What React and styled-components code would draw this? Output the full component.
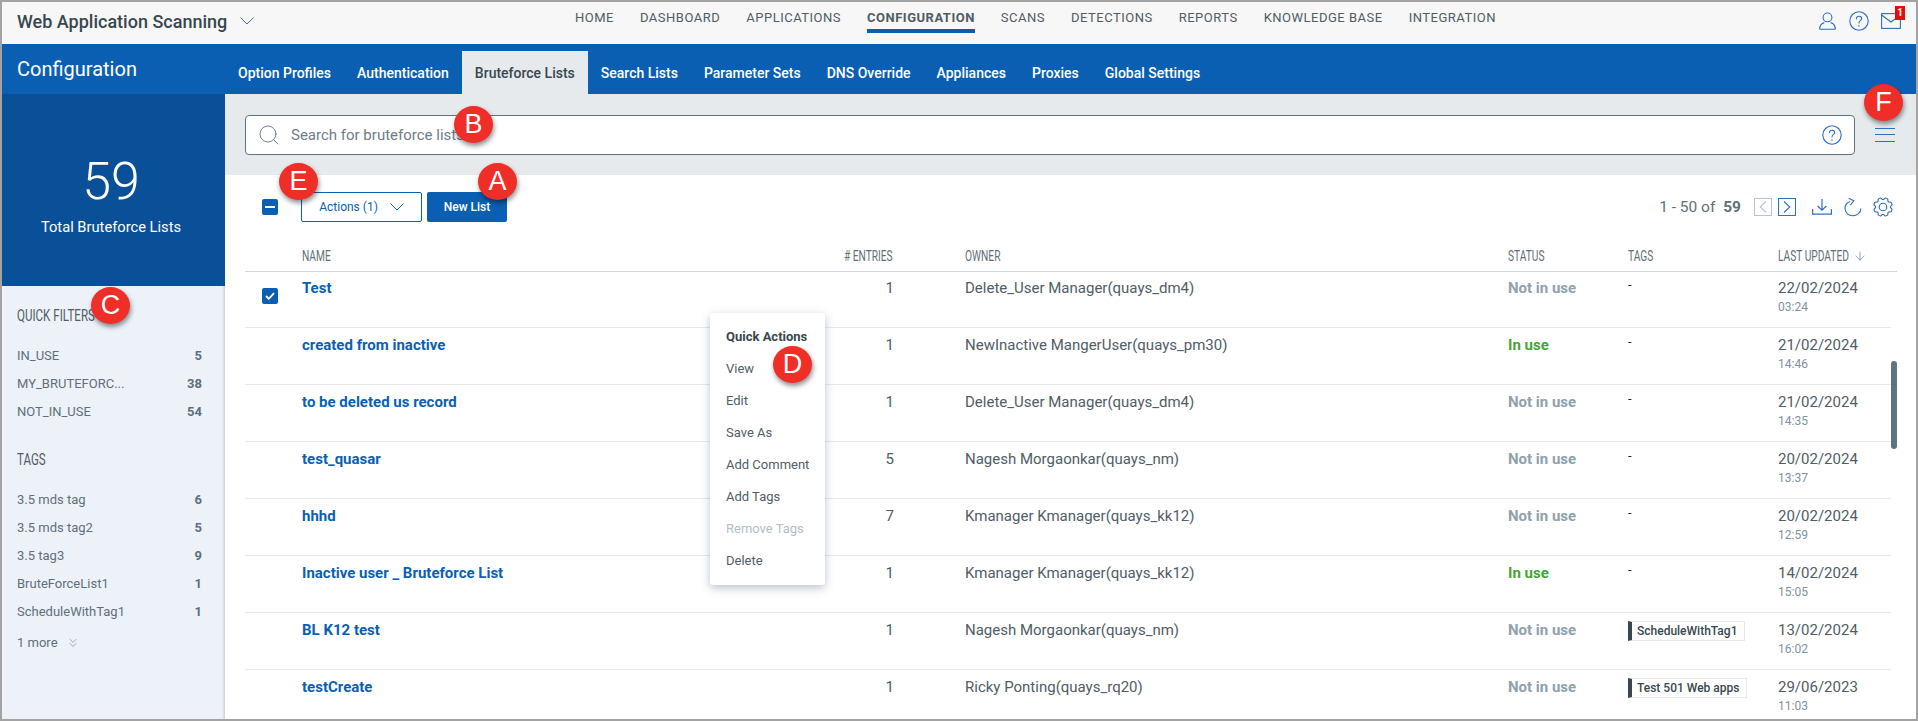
import React from 'react';
import styled, { createGlobalStyle } from 'styled-components';
import { ChevronsDown, Search, ArrowDown } from 'lucide-react';
import { PiGearLight } from 'react-icons/pi';

const GlobalStyle = createGlobalStyle`
  html, body {
    margin: 0;
    padding: 0;
    background: #a3a3a3;
    overflow: hidden;
  }
  * { box-sizing: border-box; }
`;

const NAV = ['HOME', 'DASHBOARD', 'APPLICATIONS', 'CONFIGURATION', 'SCANS', 'DETECTIONS', 'REPORTS', 'KNOWLEDGE BASE', 'INTEGRATION'];
const TABS = ['Option Profiles', 'Authentication', 'Bruteforce Lists', 'Search Lists', 'Parameter Sets', 'DNS Override', 'Appliances', 'Proxies', 'Global Settings'];
const QUICK = [['IN_USE', 5], ['MY_BRUTEFORC...', 38], ['NOT_IN_USE', 54]];
const SIDE_TAGS = [['3.5 mds tag', 6], ['3.5 mds tag2', 5], ['3.5 tag3', 9], ['BruteForceList1', 1], ['ScheduleWithTag1', 1]];
const MENU = ['View', 'Edit', 'Save As', 'Add Comment', 'Add Tags', 'Remove Tags', 'Delete'];
const ROWS = [
  { name: 'Test', entries: 1, owner: 'Delete_User Manager(quays_dm4)', used: false, date: '22/02/2024', time: '03:24', checked: true },
  { name: 'created from inactive', entries: 1, owner: 'NewInactive MangerUser(quays_pm30)', used: true, date: '21/02/2024', time: '14:46' },
  { name: 'to be deleted us record', entries: 1, owner: 'Delete_User Manager(quays_dm4)', used: false, date: '21/02/2024', time: '14:35' },
  { name: 'test_quasar', entries: 5, owner: 'Nagesh Morgaonkar(quays_nm)', used: false, date: '20/02/2024', time: '13:37' },
  { name: 'hhhd', entries: 7, owner: 'Kmanager Kmanager(quays_kk12)', used: false, date: '20/02/2024', time: '12:59' },
  { name: 'Inactive user _ Bruteforce List', entries: 1, owner: 'Kmanager Kmanager(quays_kk12)', used: true, date: '14/02/2024', time: '15:05' },
  { name: 'BL K12 test', entries: 1, owner: 'Nagesh Morgaonkar(quays_nm)', used: false, tag: 'ScheduleWithTag1', date: '13/02/2024', time: '16:02' },
  { name: 'testCreate', entries: 1, owner: 'Ricky Ponting(quays_rq20)', used: false, tag: 'Test 501 Web apps', date: '29/06/2023', time: '11:03' },
];
const CALLOUTS = [
  { label: 'A', x: 478, y: 163 },
  { label: 'B', x: 454, y: 106 },
  { label: 'C', x: 91, y: 287 },
  { label: 'D', x: 773, y: 346 },
  { label: 'E', x: 279, y: 163 },
  { label: 'F', x: 1864, y: 84 },
];

const HelpIcon = ({ size = 20 }) => (
  <svg width={size} height={size} viewBox="0 0 20 20" fill="none" stroke="#2f6fbd" strokeWidth="1.1">
    <circle cx="10" cy="10" r="9.2" />
    <path d="M7.4 7.8c0-1.6 1.2-2.6 2.7-2.6s2.6 1 2.6 2.3c0 1.9-2.7 2-2.7 4.4" strokeLinecap="round" />
    <path d="M10 14.2v1.2" strokeWidth="1.4" />
  </svg>
);

const UserIcon = () => (
  <svg width="17" height="18" viewBox="0 0 17 18" fill="none" stroke="#2f6fbd" strokeWidth="1.1">
    <circle cx="8.5" cy="5.4" r="4.4" />
    <path d="M.7 17.3c0-3.4 1.5-5.9 4.6-6.7M16.3 17.3c0-3.4-1.5-5.9-4.6-6.7M.7 17.3h15.6" />
  </svg>
);

const MailIcon = () => (
  <svg width="20" height="16" viewBox="0 0 20 16" fill="none" stroke="#2f6fbd" strokeWidth="1.1">
    <rect x=".6" y=".6" width="18.8" height="14.8" />
    <path d="M.6 2l9.4 7 9.4-7" />
  </svg>
);

const DownChevron = ({ color }) => (
  <svg width="14" height="8" viewBox="0 0 14 8" fill="none" stroke={color} strokeWidth="1">
    <path d="M.5 .6L7 7l6.500-6.400" />
  </svg>
);

const PageArrow = ({ dir }) => (
  <svg width="8" height="12" viewBox="0 0 8 12" fill="none" stroke="currentColor" strokeWidth="1.1">
    <path d={dir === 'left' ? 'M7 .5L1.2 6 7 11.5' : 'M1 .5L6.8 6 1 11.5'} />
  </svg>
);

const DownloadIcon = () => (
  <svg width="20" height="16" viewBox="0 0 20 16" fill="none" stroke="#2f6fbd" strokeWidth="1.2">
    <path d="M10 0v11M5.600 7l4.400 4.200L14.400 7M.6 10v5.200h18.800V10" />
  </svg>
);

const RefreshIcon = () => (
  <svg width="18" height="20" viewBox="0 0 18 20" fill="none" stroke="#2f6fbd" strokeWidth="1.1">
    <path d="M6 4.600C3 5.700 1 8.300 1 11.400c0 3.900 3.400 7.400 7.800 7.400 4.300 0 8-3.300 8-7.400" />
    <path d="M5.300 .8L9.800 4.300 5.600 7.900" transform="rotate(-12 7 4)" />
  </svg>
);

const App = () => (
  <>
    <GlobalStyle />
    <Frame>
      <TopBar>
        <AppTitle>Web Application Scanning</AppTitle>
        <TitleChevron><DownChevron color="#2f6fbd" /></TitleChevron>
        <NavList>
          {NAV.map((item) => (
            <NavItem key={item} $active={item === 'CONFIGURATION'}>{item}</NavItem>
          ))}
        </NavList>
        <UserTools>
          <UserIcon />
          <HelpIcon />
          <MailButton>
            <MailIcon />
            <MailBadge>1</MailBadge>
          </MailButton>
        </UserTools>
      </TopBar>

      <SubBar>
        <SectionTitle>Configuration</SectionTitle>
        <Tabs>
          {TABS.map((tab) => (
            <Tab key={tab} $active={tab === 'Bruteforce Lists'}>{tab}</Tab>
          ))}
        </Tabs>
      </SubBar>

      <Body>
        <Sidebar>
          <TotalPanel>
            <TotalNumber>59</TotalNumber>
            <TotalLabel>Total Bruteforce Lists</TotalLabel>
          </TotalPanel>
          <Filters>
            <FilterHeading><Narrow>QUICK FILTERS</Narrow></FilterHeading>
            <FilterList>
              {QUICK.map(([label, count]) => (
                <FilterRow key={label}><span>{label}</span><b>{count}</b></FilterRow>
              ))}
            </FilterList>
            <TagsHeading><Narrow>TAGS</Narrow></TagsHeading>
            <FilterList>
              {SIDE_TAGS.map(([label, count]) => (
                <FilterRow key={label}><span>{label}</span><b>{count}</b></FilterRow>
              ))}
            </FilterList>
            <MoreLink>1 more <ChevronsDown size={14} strokeWidth={1} /></MoreLink>
          </Filters>
        </Sidebar>

        <Main>
          <SearchBand>
            <SearchBox>
              <Search size={24} strokeWidth={0.9} color="#5b7583" />
              <Placeholder>Search for bruteforce lists</Placeholder>
              <HelpIcon />
            </SearchBox>
            <MenuLines><i /><i /><i /></MenuLines>
          </SearchBand>

          <Toolbar>
            <CheckBox><Dash /></CheckBox>
            <ActionsButton>Actions (1) <DownChevron color="#0b5fb3" /></ActionsButton>
            <PrimaryButton>New List</PrimaryButton>
            <ToolbarRight>
              <PageCount>1 - 50 of <b>59</b></PageCount>
              <PageButton $disabled><PageArrow dir="left" /></PageButton>
              <PageButton><PageArrow dir="right" /></PageButton>
              <ToolIcons>
                <DownloadIcon />
                <RefreshIcon />
                <GearWrap><PiGearLight size={24} color="#2f6fbd" /></GearWrap>
              </ToolIcons>
            </ToolbarRight>
          </Toolbar>

          <Table>
            <HeadRow>
              <span />
              <HeadCell><Narrow>NAME</Narrow></HeadCell>
              <HeadCell $right><Narrow $origin="right">#&nbsp;ENTRIES</Narrow></HeadCell>
              <HeadCell $owner><Narrow>OWNER</Narrow></HeadCell>
              <HeadCell><Narrow>STATUS</Narrow></HeadCell>
              <HeadCell><Narrow>TAGS</Narrow></HeadCell>
              <HeadCell>
                <Narrow>LAST UPDATED</Narrow>
                <SortArrow><ArrowDown size={14} strokeWidth={1} /></SortArrow>
              </HeadCell>
            </HeadRow>
            {ROWS.map((row) => (
              <Row key={row.name}>
                <CheckCell>
                  {row.checked && (
                    <CheckBox>
                      <svg width="10" height="8" viewBox="0 0 10 8" fill="none" stroke="#fff" strokeWidth="1.8">
                        <path d="M1 4l2.800 2.800L9 1.200" />
                      </svg>
                    </CheckBox>
                  )}
                </CheckCell>
                <NameCell>{row.name}</NameCell>
                <EntriesCell>{row.entries}</EntriesCell>
                <OwnerCell>{row.owner}</OwnerCell>
                <StatusCell $used={row.used}>{row.used ? 'In use' : 'Not in use'}</StatusCell>
                <TagCell>
                  {row.tag ? <TagChip>{row.tag}</TagChip> : <NoTag>-</NoTag>}
                </TagCell>
                <DateCell>
                  <span>{row.date}</span>
                  <small>{row.time}</small>
                </DateCell>
              </Row>
            ))}
            <ScrollThumb />
          </Table>
        </Main>
      </Body>

      <QuickMenu>
        <MenuTitle>Quick Actions</MenuTitle>
        {MENU.map((item) => (
          <MenuItem key={item} $disabled={item === 'Remove Tags'}>{item}</MenuItem>
        ))}
      </QuickMenu>

      {CALLOUTS.map((c) => (
        <Callout key={c.label} $x={c.x} $y={c.y}>{c.label}</Callout>
      ))}
    </Frame>
  </>
);

export default App;

const Frame = styled.div`
  position: relative;
  width: 1918px;
  height: 721px;
  padding: 2px;
  display: flex;
  flex-direction: column;
  overflow: hidden;
  font-family: Roboto, "Liberation Sans", sans-serif;
`;

const TopBar = styled.header`
  flex: none;
  height: 42px;
  display: flex;
  align-items: flex-start;
  background: #f7f7f7;
  padding-left: 15px;
`;

const AppTitle = styled.div`
  width: 208px;
  margin-top: 9px;
  font-size: 18px;
  line-height: 21px;
  font-weight: 500;
  color: #37474f;
  white-space: nowrap;
`;

const TitleChevron = styled.span`
  display: flex;
  margin: 15px 0 0 15px;
`;

const NavList = styled.nav`
  display: flex;
  gap: 26px;
  margin-left: 321px;
  height: 31px;
`;

const NavItem = styled.a`
  padding-top: 8px;
  height: 31px;
  font-size: 13px;
  line-height: 15px;
  letter-spacing: 0.5px;
  white-space: nowrap;
  color: #4f5d66;
  font-weight: ${(p) => (p.$active ? 700 : 400)};
  border-bottom: ${(p) => (p.$active ? '4px solid #0b5fb3' : '4px solid transparent')};
`;

const UserTools = styled.div`
  margin-left: auto;
  margin-right: 15px;
  padding-top: 9px;
  display: flex;
  align-items: center;
  gap: 13px;
`;

const MailButton = styled.span`
  position: relative;
  display: flex;
  margin-left: -1px;
`;

const MailBadge = styled.span`
  position: absolute;
  top: -7px;
  right: -4px;
  width: 10px;
  height: 14px;
  background: #e30f0f;
  color: #fff;
  font-size: 10px;
  line-height: 14px;
  font-weight: 700;
  text-align: center;
`;

const SubBar = styled.div`
  flex: none;
  height: 50px;
  display: flex;
  background: #0b5fb3;
`;

const SectionTitle = styled.div`
  width: 223px;
  padding: 14px 0 0 15px;
  font-size: 20px;
  line-height: 23px;
  color: #fff;
`;

const Tabs = styled.div`
  display: flex;
  align-items: flex-end;
`;

const Tab = styled.a`
  height: 43px;
  padding: 14px 13px 0;
  font-size: 14px;
  line-height: 16px;
  font-weight: 500;
  white-space: nowrap;
  color: ${(p) => (p.$active ? '#37474f' : '#fff')};
  background: ${(p) => (p.$active ? '#e6eaed' : 'transparent')};
`;

const Body = styled.div`
  flex: 1;
  min-height: 0;
  display: flex;
`;

const Sidebar = styled.aside`
  flex: none;
  width: 223px;
  display: flex;
  flex-direction: column;
  background: #edf2f9;
  box-shadow: inset -3px 0 3px -2px #b9c6d3;
`;

const TotalPanel = styled.div`
  flex: none;
  height: 192px;
  display: flex;
  flex-direction: column;
  align-items: center;
  padding: 58px 5px 0 0;
  background: #0a5099;
  color: #fff;
`;

const TotalNumber = styled.div`
  font-size: 52px;
  line-height: 60px;
  font-weight: 300;
`;

const TotalLabel = styled.div`
  margin-top: 6px;
  font-size: 14.7px;
  line-height: 18px;
`;

const Filters = styled.div`
  padding: 18px 23px 0 15px;
`;

const Narrow = styled.span`
  display: inline-block;
  font-size: 15px;
  line-height: 18px;
  transform: scaleX(0.68);
  transform-origin: ${(p) => p.$origin || 'left'} center;
  white-space: nowrap;
`;

const FilterHeading = styled.div`
  height: 22px;
  color: #4f5d66;
  ${Narrow} {
    font-size: 17px;
    line-height: 22px;
  }
`;

const TagsHeading = styled(FilterHeading)`
  margin-top: 23px;
`;

const FilterList = styled.div`
  margin-top: 15px;
  display: flex;
  flex-direction: column;
`;

const FilterRow = styled.div`
  height: 28px;
  display: flex;
  align-items: center;
  justify-content: space-between;
  font-size: 13px;
  color: #5f6f79;
  b {
    font-weight: 700;
    color: #5f6f79;
  }
`;

const MoreLink = styled.div`
  margin-top: 9px;
  display: flex;
  align-items: center;
  gap: 8px;
  font-size: 13px;
  line-height: 18px;
  color: #5f6f79;
`;

const Main = styled.main`
  flex: 1;
  min-width: 0;
  display: flex;
  flex-direction: column;
  background: #fff;
`;

const SearchBand = styled.div`
  flex: none;
  height: 81px;
  display: flex;
  align-items: center;
  padding: 0 21px 0 20px;
  background: #e6eaed;
`;

const SearchBox = styled.div`
  width: 1610px;
  height: 40px;
  display: flex;
  align-items: center;
  padding: 0 12px 0 11px;
  background: #fff;
  border: 1px solid #5b7583;
  border-radius: 4px;
`;

const Placeholder = styled.div`
  flex: 1;
  margin-left: 10px;
  font-size: 15px;
  color: #6b7d88;
`;

const MenuLines = styled.div`
  margin-left: auto;
  width: 20px;
  display: flex;
  flex-direction: column;
  gap: 5.5px;
  i {
    display: block;
    height: 1px;
    background: #2f6fbd;
  }
`;

const Toolbar = styled.div`
  flex: none;
  height: 65px;
  display: flex;
  align-items: flex-start;
  padding: 17px 23px 0 37px;
`;

const CheckBox = styled.span`
  width: 16px;
  height: 16px;
  display: flex;
  align-items: center;
  justify-content: center;
  border-radius: 2px;
  background: #0b5fb3;
  ${Toolbar} & {
    margin: 7px 23px 0 0;
  }
`;

const Dash = styled.i`
  width: 10px;
  height: 2px;
  background: #fff;
`;

const ActionsButton = styled.button`
  width: 121px;
  height: 30px;
  display: flex;
  align-items: center;
  justify-content: center;
  gap: 12px;
  padding: 0;
  background: #fff;
  border: 1px solid #0b5fb3;
  border-radius: 2px;
  font: 400 12px Roboto, sans-serif;
  color: #0b5fb3;
`;

const PrimaryButton = styled.button`
  width: 80px;
  height: 30px;
  margin-left: 5px;
  padding: 0;
  border: none;
  border-radius: 2px;
  background: #0b5fb3;
  font: 500 12px Roboto, sans-serif;
  color: #fff;
`;

const ToolbarRight = styled.div`
  margin-left: auto;
  display: flex;
  align-items: center;
  height: 30px;
`;

const PageCount = styled.div`
  margin-right: 13px;
  font-size: 15.5px;
  color: #5f6f79;
  b {
    margin-left: 4px;
    font-weight: 700;
  }
`;

const PageButton = styled.span`
  width: 18px;
  height: 18px;
  margin-right: 6px;
  display: flex;
  align-items: center;
  justify-content: center;
  border: 1px solid ${(p) => (p.$disabled ? '#b7c6ce' : '#2f6fbd')};
  color: ${(p) => (p.$disabled ? '#b7c6ce' : '#2f6fbd')};
`;

const ToolIcons = styled.div`
  margin-left: 10px;
  display: flex;
  align-items: center;
  gap: 12px;
`;

const GearWrap = styled.span`
  display: flex;
  margin: 0 -2px 0 -3px;
`;

const Table = styled.div`
  position: relative;
  flex: 1;
  min-height: 0;
  margin-left: 20px;
  margin-right: 19px;
  overflow: hidden;
`;

const HeadRow = styled.div`
  display: grid;
  grid-template-columns: 57px 483px 108px 615px 120px 150px 1fr;
  height: 32px;
  align-items: center;
  border-bottom: 1px solid #cfd8dc;
`;

const HeadCell = styled.div`
  display: flex;
  align-items: center;
  color: #5f6f79;
  justify-content: ${(p) => (p.$right ? 'flex-end' : 'flex-start')};
  padding-left: ${(p) => (p.$owner ? '72px' : '0')};
  white-space: nowrap;
`;

const SortArrow = styled.span`
  display: flex;
  margin-left: -29px;
  color: #2f6fbd;
`;

const Row = styled.div`
  display: grid;
  grid-template-columns: 57px 483px 108px 615px 120px 150px 1fr;
  height: 57px;
  padding-top: 8px;
  margin-right: 6px;
  border-bottom: 1px solid #e6eaed;
  font-size: 15px;
  line-height: 18px;
  color: #4f5d66;
  &:nth-child(2) {
    height: 56px;
    padding-top: 7px;
  }
`;

const CheckCell = styled.div`
  padding: 9px 0 0 17px;
`;

const NameCell = styled.div`
  font-size: 15px;
  font-weight: 700;
  color: #0b5fb3;
`;

const EntriesCell = styled.div`
  margin-right: -1px;
  text-align: right;
`;

const OwnerCell = styled.div`
  padding-left: 72px;
  font-size: 15px;
`;

const StatusCell = styled.div`
  font-weight: 700;
  font-size: 15px;
  color: ${(p) => (p.$used ? '#43a536' : '#8ea1ac')};
`;

const TagCell = styled.div``;

const NoTag = styled.span`
  font-size: 13px;
  line-height: 12px;
  display: block;
  color: #222;
`;

const TagChip = styled.span`
  display: inline-block;
  height: 20px;
  margin-top: -1px;
  padding: 0 7px 0 5px;
  border: 1px solid #e6eaed;
  border-left: 4px solid #37474f;
  font-size: 12px;
  line-height: 18px;
  font-weight: 500;
  color: #37474f;
  white-space: nowrap;
`;

const DateCell = styled.div`
  display: flex;
  flex-direction: column;
  small {
    margin-top: 3px;
    font-size: 12px;
    line-height: 15px;
    color: #7f929d;
  }
`;

const ScrollThumb = styled.div`
  position: absolute;
  top: 121px;
  right: 0;
  width: 6px;
  height: 88px;
  border-radius: 3px;
  background: #5b7583;
`;

const QuickMenu = styled.div`
  position: absolute;
  left: 710px;
  top: 313px;
  width: 115px;
  height: 272px;
  padding: 8px 0 0 16px;
  background: #fff;
  border-radius: 3px;
  box-shadow: 0 3px 10px rgba(60, 80, 110, 0.35);
`;

const MenuTitle = styled.div`
  height: 32px;
  line-height: 32px;
  font-size: 13px;
  font-weight: 700;
  color: #37474f;
  white-space: nowrap;
`;

const MenuItem = styled.div`
  height: 32px;
  line-height: 32px;
  font-size: 13px;
  white-space: nowrap;
  color: ${(p) => (p.$disabled ? '#b0bec5' : '#4f5d66')};
`;

const Callout = styled.div`
  position: absolute;
  left: ${(p) => p.$x}px;
  top: ${(p) => p.$y}px;
  width: 39px;
  height: 37px;
  border-radius: 50%;
  background: #ee2e27;
  box-shadow: 1px 3px 5px rgba(0, 0, 0, 0.45);
  color: #fff;
  font: 400 27px/37px "Liberation Sans", Arial, sans-serif;
  text-align: center;
`;
